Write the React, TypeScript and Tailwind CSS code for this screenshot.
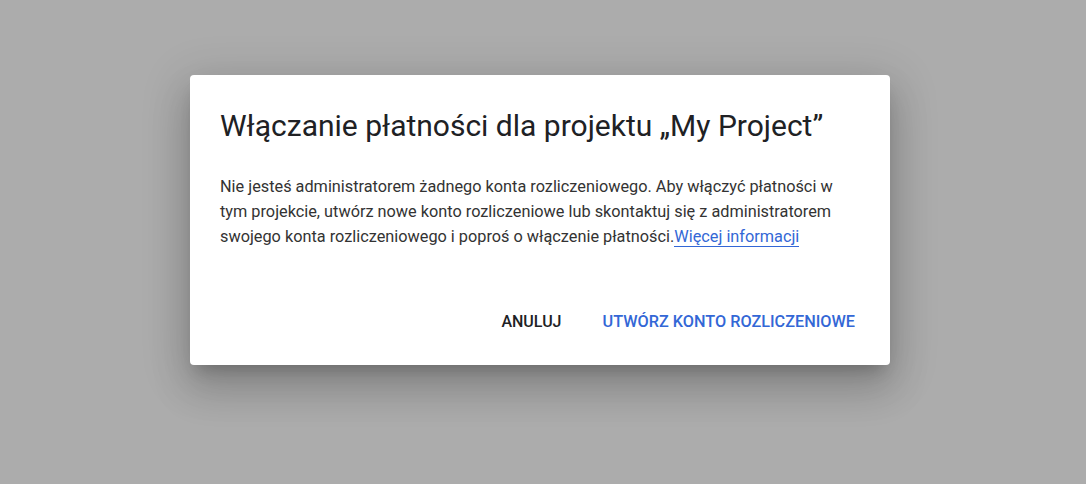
export default function App() {
  return (
    <div
      className="w-[1086px] h-[484px] bg-[#acacac] flex items-start justify-center pt-[75px] pr-[6px]"
      style={{ fontFamily: 'Roboto, "Liberation Sans", sans-serif' }}
    >
      <div className="w-[700px] h-[290px] bg-white rounded flex flex-col shadow-[0_11px_15px_-7px_rgba(0,0,0,0.2),0_24px_38px_3px_rgba(0,0,0,0.14),0_9px_46px_8px_rgba(0,0,0,0.12)]">
        <h2 className="pt-[31px] px-[30px] text-[30px] leading-[40px] text-[#202124] font-normal whitespace-nowrap">
          Włączanie płatności dla projektu „My Project”
        </h2>
        <p className="mt-[28px] pl-[30px] pr-[36px] text-[16.3px] leading-[25px] text-[#333333]">
          Nie jesteś administratorem żadnego konta rozliczeniowego. Aby włączyć płatności w tym projekcie,
          utwórz nowe konto rozliczeniowe lub skontaktuj się z administratorem swojego konta rozliczeniowego i
          poproś o włączenie płatności.
          <a className="text-[#3367d6] border-b border-[#3367d6]" href="#">
            Więcej informacji
          </a>
        </p>
        <div className="mt-auto flex justify-end items-center gap-[41px] pr-[35px] pb-[23px]">
          <button className="h-10 text-[16px] font-medium text-[#202124]">ANULUJ</button>
          <button className="h-10 text-[16.25px] font-medium text-[#3367d6]">
            UTWÓRZ KONTO ROZLICZENIOWE
          </button>
        </div>
      </div>
    </div>
  );
}
